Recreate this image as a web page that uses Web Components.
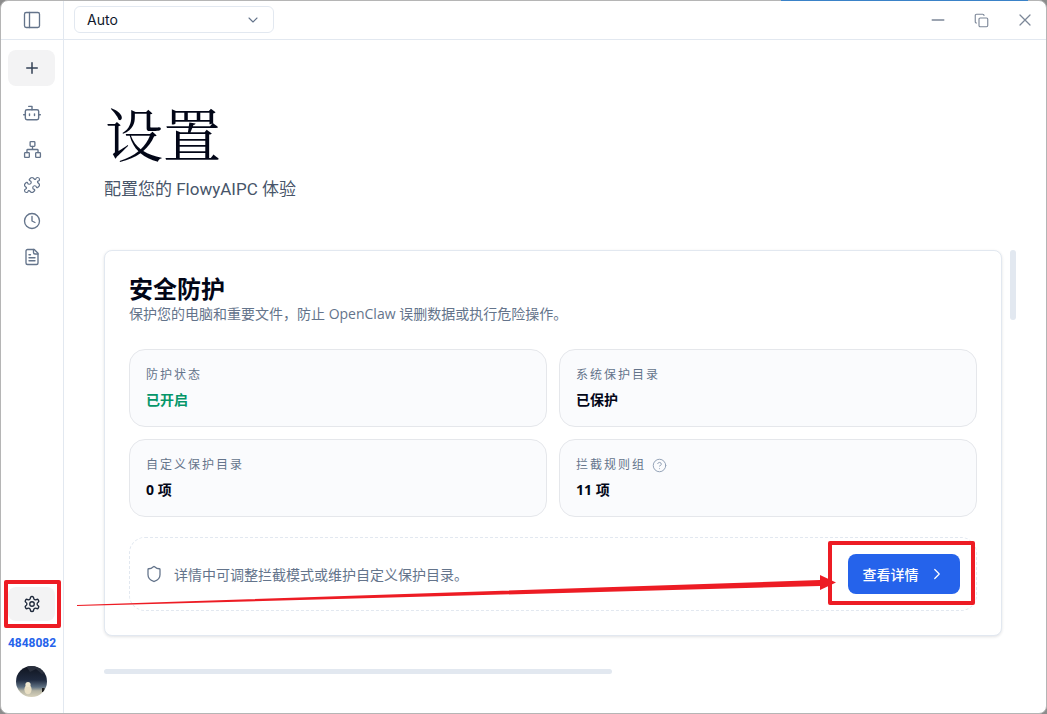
<!DOCTYPE html>
<html lang="zh">
<head>
<meta charset="utf-8">
<title>设置</title>
<style>
  html, body { margin: 0; height: 100%; background: #8c8c8c; overflow: hidden; }
  body { font-family: Inter, "Noto Sans CJK SC", sans-serif; }
</style>
</head>
<body>
<app-shell>
  <side-bar slot="side"></side-bar>
  <top-bar slot="top"></top-bar>
  <settings-page slot="main"></settings-page>
</app-shell>

<script>
const ICONS = {
  panel: '<rect x="3" y="3" width="18" height="18" rx="2"/><path d="M9 3v18"/>',
  plus: '<path d="M5 12h14M12 5v14"/>',
  bot: '<path d="M12 8V4H8"/><rect x="4" y="8" width="16" height="12" rx="2"/><path d="M2 14h2M20 14h2M15 13v2M9 13v2"/>',
  network: '<rect x="16" y="16" width="6" height="6" rx="1"/><rect x="2" y="16" width="6" height="6" rx="1"/><rect x="9" y="2" width="6" height="6" rx="1"/><path d="M5 16v-3a1 1 0 0 1 1-1h12a1 1 0 0 1 1 1v3M12 12V8"/>',
  puzzle: '<path d="M15.39 4.39a1 1 0 0 0 1.68-.474 2.5 2.5 0 1 1 3.014 3.015 1 1 0 0 0-.474 1.68l1.683 1.682a2.414 2.414 0 0 1 0 3.414L19.61 15.39a1 1 0 0 1-1.68-.474 2.5 2.5 0 1 0-3.014 3.015 1 1 0 0 1 .474 1.68l-1.683 1.682a2.414 2.414 0 0 1-3.414 0L8.61 19.61a1 1 0 0 0-1.68.474 2.5 2.5 0 1 1-3.014-3.015 1 1 0 0 0 .474-1.68l-1.683-1.682a2.414 2.414 0 0 1 0-3.414L4.39 8.61a1 1 0 0 1 1.68.474 2.5 2.5 0 1 0 3.014-3.015 1 1 0 0 1-.474-1.68l1.683-1.682a2.414 2.414 0 0 1 3.414 0z"/>',
  clock: '<circle cx="12" cy="12" r="10"/><path d="M12 6v6l4 2"/>',
  file: '<path d="M15 2H6a2 2 0 0 0-2 2v16a2 2 0 0 0 2 2h12a2 2 0 0 0 2-2V7z"/><path d="M14 2v4a2 2 0 0 0 2 2h4M10 9H8M16 13H8M16 17H8"/>',
  gear: '<path d="M12.22 2h-.44a2 2 0 0 0-2 2v.18a2 2 0 0 1-1 1.73l-.43.25a2 2 0 0 1-2 0l-.15-.08a2 2 0 0 0-2.73.73l-.22.38a2 2 0 0 0 .73 2.73l.15.1a2 2 0 0 1 1 1.72v.51a2 2 0 0 1-1 1.74l-.15.09a2 2 0 0 0-.73 2.73l.22.38a2 2 0 0 0 2.73.73l.15-.08a2 2 0 0 1 2 0l.43.25a2 2 0 0 1 1 1.73V20a2 2 0 0 0 2 2h.44a2 2 0 0 0 2-2v-.18a2 2 0 0 1 1-1.73l.43-.25a2 2 0 0 1 2 0l.15.08a2 2 0 0 0 2.73-.73l.22-.39a2 2 0 0 0-.73-2.73l-.15-.08a2 2 0 0 1-1-1.74v-.5a2 2 0 0 1 1-1.74l.15-.09a2 2 0 0 0 .73-2.73l-.22-.38a2 2 0 0 0-2.73-.73l-.15.08a2 2 0 0 1-2 0l-.43-.25a2 2 0 0 1-1-1.73V4a2 2 0 0 0-2-2z"/><circle cx="12" cy="12" r="3"/>',
  chevronDown: '<path d="m6 9 6 6 6-6"/>',
  chevronRight: '<path d="m9 18 6-6-6-6"/>',
  minus: '<path d="M5 12h14"/>',
  copy: '<rect x="8" y="8" width="14" height="14" rx="2"/><path d="M4 16c-1.1 0-2-.9-2-2V4c0-1.1.9-2 2-2h10c1.1 0 2 .9 2 2"/>',
  close: '<path d="M18 6 6 18M6 6l12 12"/>',
  shield: '<path d="M20 13c0 5-3.5 7.5-7.66 8.95a1 1 0 0 1-.67-.01C7.5 20.5 4 18 4 13V6a1 1 0 0 1 1-1c2 0 4.5-1.2 6.24-2.72a1.17 1.17 0 0 1 1.52 0C14.51 3.81 17 5 19 5a1 1 0 0 1 1 1z"/>',
  help: '<circle cx="12" cy="12" r="10"/><path d="M9.09 9a3 3 0 0 1 5.83 1c0 2-3 3-3 3M12 17h.01"/>'
};

class UiIcon extends HTMLElement {
  connectedCallback() {
    const name = this.getAttribute('name');
    const size = this.getAttribute('size') || 18;
    const sw = this.getAttribute('stroke') || 2;
    this.attachShadow({ mode: 'open' }).innerHTML = `
      <style>:host { display: inline-flex; line-height: 0; }</style>
      <svg width="${size}" height="${size}" viewBox="0 0 24 24" fill="none" stroke="currentColor"
        stroke-width="${sw}" stroke-linecap="round" stroke-linejoin="round">${ICONS[name]}</svg>`;
  }
}
customElements.define('ui-icon', UiIcon);

class AppShell extends HTMLElement {
  constructor() {
    super();
    this.attachShadow({ mode: 'open' }).innerHTML = `
      <style>
        :host { display: block; position: relative; width: 1047px; height: 714px; }
        .win {
          width: 100%; height: 100%; box-sizing: border-box;
          display: grid; grid-template-columns: 62px 1fr;
          background: #fff; border-radius: 8px; overflow: hidden;
          border: 1px solid #b5b5b5;
        }
        .right { display: flex; flex-direction: column; min-width: 0; border-left: 1px solid #e2e8f0; }
        .strip { position: absolute; top: 0; left: 781px; width: 247px; height: 1px; background: #3a82c8; }
      </style>
      <div class="win">
        <slot name="side"></slot>
        <div class="right">
          <slot name="top"></slot>
          <slot name="main"></slot>
        </div>
      </div>
      <div class="strip"></div>
      <red-annotations></red-annotations>`;
  }
}
customElements.define('app-shell', AppShell);

class SideBar extends HTMLElement {
  constructor() {
    super();
    this.attachShadow({ mode: 'open' }).innerHTML = `
      <style>
        :host { display: flex; flex-direction: column; align-items: center; height: 100%; color: #64748b; }
        .head { height: 38px; width: 100%; display: flex; align-items: center; justify-content: center; border-bottom: 1px solid #e2e8f0; }
        .new { width: 47px; height: 36px; margin: 10px 1px 0 0; border-radius: 8px; background: #f3f3f4; color: #334155; display: flex; align-items: center; justify-content: center; }
        nav { display: flex; flex-direction: column; align-items: center; gap: 18px; margin-top: 18px; }
        nav ui-icon { height: 18px; align-items: center; }
        .spacer { flex: 1; }
        .gear { width: 47px; height: 34px; margin-right: 1px; border-radius: 8px; background: #f3f3f4; color: #1e293b; display: flex; align-items: center; justify-content: center; }
        .uid { font: 700 12px/16px Roboto, sans-serif; color: #2563eb; margin-top: 14px; }
        .avatar { margin: 15px 1px 16px 0; width: 31px; height: 31px; border-radius: 50%; overflow: hidden; line-height: 0; }
      </style>
      <div class="head"><ui-icon name="panel" size="20" stroke="1.6"></ui-icon></div>
      <div class="new"><ui-icon name="plus" size="18"></ui-icon></div>
      <nav>
        <ui-icon name="bot" size="20" stroke="1.7"></ui-icon>
        <ui-icon name="network" size="19" stroke="1.7"></ui-icon>
        <ui-icon name="puzzle" size="18" stroke="1.6"></ui-icon>
        <ui-icon name="clock" size="18" stroke="1.8"></ui-icon>
        <ui-icon name="file" size="18" stroke="1.8"></ui-icon>
      </nav>
      <div class="spacer"></div>
      <div class="gear"><ui-icon name="gear" size="18" stroke="1.8"></ui-icon></div>
      <div class="uid">4848082</div>
      <div class="avatar">
        <svg width="31" height="31" viewBox="0 0 31 31">
          <defs><linearGradient id="sky" x1="0" y1="0" x2="0" y2="1">
            <stop offset="0" stop-color="#10141f"/><stop offset=".45" stop-color="#1f2a3f"/><stop offset=".68" stop-color="#5f7183"/><stop offset=".8" stop-color="#b4b3a3"/><stop offset="1" stop-color="#d8d2bc"/>
          </linearGradient></defs>
          <rect width="31" height="31" fill="url(#sky)"/>
          <path d="M10 0l4 6 6-3 6 5 5-2V0z" fill="#2f3644" opacity=".8"/>
          <ellipse cx="12" cy="23.5" rx="3.6" ry="4.8" fill="#e9dfc4"/>
          <circle cx="12" cy="18.5" r="2.6" fill="#f0e8d0"/>
          <rect x="26" y="22" width="2.5" height="4" fill="#1a1a1c"/>
        </svg>
      </div>`;
  }
}
customElements.define('side-bar', SideBar);

class TopBar extends HTMLElement {
  constructor() {
    super();
    this.attachShadow({ mode: 'open' }).innerHTML = `
      <style>
        :host { display: flex; align-items: center; flex: none; height: 38px; padding-left: 10px; border-bottom: 1px solid #e2e8f0; }
        .select {
          box-sizing: border-box; width: 200px; height: 27px; margin-bottom: 1px; border: 1px solid #e2e8f0; border-radius: 6px;
          display: flex; align-items: center; justify-content: space-between; padding: 0 12px;
          font: 14px Inter, sans-serif; color: #0f172a;
        }
        .select ui-icon { color: #64748b; }
        .controls { margin-left: auto; display: flex; align-items: center; gap: 23.5px; padding-right: 11px; color: #7c8798; }
        .controls ui-icon { width: 20px; justify-content: center; }
      </style>
      <div class="select"><span>Auto</span><ui-icon name="chevronDown" size="16" stroke="1.6"></ui-icon></div>
      <div class="controls">
        <ui-icon name="minus" size="20" stroke="1.6"></ui-icon>
        <ui-icon name="copy" size="15" stroke="1.8"></ui-icon>
        <ui-icon name="close" size="20" stroke="1.5"></ui-icon>
      </div>`;
  }
}
customElements.define('top-bar', TopBar);

class StatCard extends HTMLElement {
  constructor() {
    super();
    this.attachShadow({ mode: 'open' }).innerHTML = `
      <style>
        :host { display: block; box-sizing: border-box; height: 78px; padding: 15px 16px; background: #fafbfd; border: 1px solid #e5e7eb; border-radius: 16px; }
        .label { display: flex; align-items: center; gap: 6px; font: 12px/20px Inter, "Noto Sans CJK SC", sans-serif; letter-spacing: 2px; color: #64748b; }
        .value { margin-top: 5px; font: 700 14px/20px "Open Sans", "Noto Sans CJK SC", sans-serif; color: var(--value, #020617); }
      </style>
      <div class="label"><slot name="label"></slot></div>
      <div class="value"><slot></slot></div>`;
  }
}
customElements.define('stat-card', StatCard);

class SettingsPage extends HTMLElement {
  constructor() {
    super();
    this.attachShadow({ mode: 'open' }).innerHTML = `
      <style>
        :host { display: block; flex: 1; min-height: 0; position: relative; padding: 0 0 0 40px; }
        h1 { margin: 0; padding: 57px 0 0 1px; font: 400 58px/70px "Noto Serif CJK SC", "Noto Sans CJK SC", serif; color: #020617; }
        .sub { margin-top: 10px; font: 17px/24px Roboto, "Noto Sans CJK SC", sans-serif; color: #475569; }
        .card {
          margin-top: 49px; width: 898px; height: 386px; box-sizing: border-box; padding: 24px;
          background: #fff; border: 1px solid #e2e8f0; border-radius: 8px;
          box-shadow: 0 1px 3px rgba(15,23,42,.12);
        }
        h2 { margin: 0; font: 700 24px/30px Inter, "Noto Sans CJK SC", sans-serif; color: #020617; }
        .desc { font: 14px/18px "Open Sans", "Noto Sans CJK SC", sans-serif; color: #64748b; }
        .grid { margin-top: 26px; display: grid; grid-template-columns: 1fr 1fr; gap: 12px; }
        .foot {
          margin-top: 20px; height: 74px; box-sizing: border-box; padding: 0 16px 0 15px;
          border: 1px dashed #e2e8f0; border-radius: 16px;
          display: flex; align-items: center; gap: 11px;
          font: 14px Inter, "Noto Sans CJK SC", sans-serif; color: #64748b;
        }
        .btn {
          margin-left: auto; width: 112px; height: 40px; border-radius: 8px; background: #2563eb; color: #fff;
          display: flex; align-items: center; justify-content: center; gap: 9px; font-weight: 500;
        }
        .hbar { margin-top: 33px; width: 508px; height: 5px; border-radius: 3px; background: #e2e8f0; }
        .vbar { position: absolute; top: 210px; left: 946px; width: 6px; height: 70px; border-radius: 3px; background: #e2e8f0; }
        .help { color: #94a3b8; }
        .ok { --value: #059669; }
      </style>
      <h1>设置</h1>
      <div class="sub">配置您的 FlowyAIPC 体验</div>
      <section class="card">
        <h2>安全防护</h2>
        <div class="desc">保护您的电脑和重要文件，防止 OpenClaw 误删数据或执行危险操作。</div>
        <div class="grid">
          <stat-card class="ok"><span slot="label">防护状态</span>已开启</stat-card>
          <stat-card><span slot="label">系统保护目录</span>已保护</stat-card>
          <stat-card><span slot="label">自定义保护目录</span>0 项</stat-card>
          <stat-card><span slot="label">拦截规则组</span><ui-icon slot="label" class="help" name="help" size="15" stroke="1.6"></ui-icon>11 项</stat-card>
        </div>
        <div class="foot">
          <ui-icon name="shield" size="18" stroke="1.7"></ui-icon>
          <span>详情中可调整拦截模式或维护自定义保护目录。</span>
          <div class="btn"><span>查看详情</span><ui-icon name="chevronRight" size="18" stroke="1.6"></ui-icon></div>
        </div>
      </section>
      <div class="hbar"></div>
      <div class="vbar"></div>`;
  }
}
customElements.define('settings-page', SettingsPage);

// red markup drawn over the screenshot
class RedAnnotations extends HTMLElement {
  constructor() {
    super();
    this.attachShadow({ mode: 'open' }).innerHTML = `
      <style>
        :host { position: absolute; inset: 0; pointer-events: none; }
        .box { position: absolute; box-sizing: border-box; border: 4px solid #ed1c24; border-radius: 2px; }
        .a { left: 4px; top: 580px; width: 57px; height: 48px; }
        .b { left: 828px; top: 541px; width: 147px; height: 64px; }
        svg { position: absolute; inset: 0; }
      </style>
      <div class="box a"></div>
      <div class="box b"></div>
      <svg width="1047" height="714">
        <polygon points="77,605 820,580 820,575 836,582.5 820,590 820,586 77,606" fill="#ed1c24"/>
      </svg>`;
  }
}
customElements.define('red-annotations', RedAnnotations);
</script>
</body>
</html>
